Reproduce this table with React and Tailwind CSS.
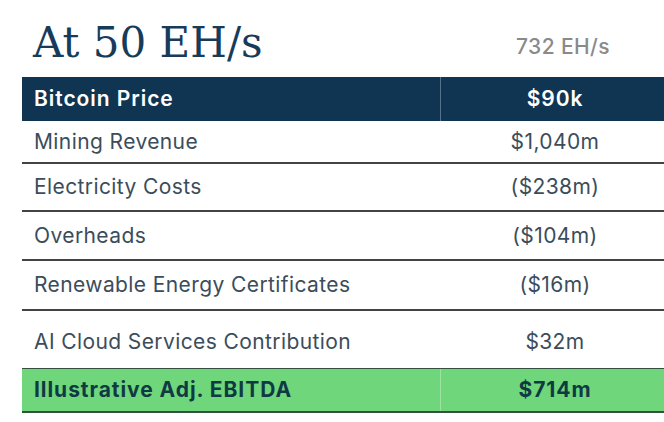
const rows = [
  { label: 'Mining Revenue', value: '$1,040m', h: 'h-[43px]' },
  { label: 'Electricity Costs', value: '($238m)', h: 'h-[48px]' },
  { label: 'Overheads', value: '($104m)', h: 'h-[49px]' },
  { label: 'Renewable Energy Certificates', value: '($16m)', h: 'h-[50px]' },
];

export default function App() {
  return (
    <div className="w-[664px] h-[422px] overflow-hidden bg-white pl-[22px] font-['Inter',sans-serif] tracking-[0.025em]">
      {/* title */}
      <div className="flex items-end w-[647px] h-[77px] pb-[10px]">
        <div className="w-[419px] pl-[11px] font-['DejaVu_Serif',serif] text-[42px] leading-[48px] tracking-normal text-[#173b5a]">
          At 50 EH/s
        </div>
        <div className="w-[228px] pl-[16px] text-center text-[21px] font-medium leading-[28px] text-[#8a8a8a] pb-[6px]">
          732 EH/s
        </div>
      </div>

      <div className="w-[647px]">
        {/* header */}
        <div className="grid grid-cols-[419px_228px] h-[44px] bg-[#0f3553] text-white text-[21px] font-semibold tracking-[0.045em]">
          <div className="flex items-center pl-[12px] border-r border-[#56708a]">Bitcoin Price</div>
          <div className="flex items-center justify-center">$90k</div>
        </div>

        {rows.map((r) => (
          <div key={r.label} className={`grid grid-cols-[419px_228px] ${r.h} border-b-2 border-[#404447] text-[21px] text-[#3b4d5b]`}>
            <div className="flex items-center pl-[12px]">{r.label}</div>
            <div className="flex items-center justify-center">{r.value}</div>
          </div>
        ))}

        <div className="grid grid-cols-[419px_228px] h-[57px] text-[21px] text-[#3b4d5b]">
          <div className="flex items-center pl-[12px] pt-[4px]">AI Cloud Services Contribution</div>
          <div className="flex items-center justify-center pt-[4px]">$32m</div>
        </div>

        {/* total */}
        <div className="grid grid-cols-[419px_228px] h-[45px] bg-[#6fd67b] border-t border-b-2 border-[#35503f] text-[21px] font-bold tracking-[0.045em] text-[#0f3a44]">
          <div className="flex items-center pl-[12px] border-r border-[#9ae3a2]">Illustrative Adj. EBITDA</div>
          <div className="flex items-center justify-center">$714m</div>
        </div>
      </div>
    </div>
  );
}
